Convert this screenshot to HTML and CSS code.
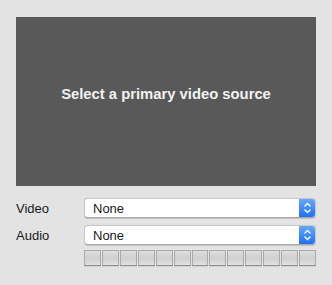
FILE: index.html
```html
<!DOCTYPE html>
<html>
<head>
<meta charset="utf-8">
<link rel="stylesheet" href="styles.css">
</head>
<body>
<div class="app">
  <div class="preview"><span class="msg">Select a primary video source</span></div>
  <div class="form">
    <label class="lbl">Video</label>
    <div class="popup"><span class="val">None</span><span class="step"><svg width="9" height="12" viewBox="0 0 9 12"><path d="M1.5 4.5 L4.5 1.5 L7.5 4.5 M1.5 7.5 L4.5 10.5 L7.5 7.5" fill="none" stroke="#fff" stroke-width="1.3"/></svg></span></div>
    <label class="lbl">Audio</label>
    <div class="popup"><span class="val">None</span><span class="step"><svg width="9" height="12" viewBox="0 0 9 12"><path d="M1.5 4.5 L4.5 1.5 L7.5 4.5 M1.5 7.5 L4.5 10.5 L7.5 7.5" fill="none" stroke="#fff" stroke-width="1.3"/></svg></span></div>
    <span></span>
    <div class="meter">
      <i></i><i></i><i></i><i></i><i></i><i></i><i></i><i></i><i></i><i></i><i></i><i></i><i></i>
    </div>
  </div>
</div>
</body>
</html>
```
FILE: styles.css
```css
html, body { margin: 0; padding: 0; }
body {
  background: #e3e3e3;
  font-family: "Liberation Sans", Arial, sans-serif;
  width: 332px;
  height: 285px;
  overflow: hidden;
}
.app { padding: 17px 16px 0 16px; }
.preview {
  height: 169px;
  box-sizing: border-box;
  padding-bottom: 16px;
  background: #595959;
  display: flex;
  align-items: center;
  justify-content: center;
}
.msg {
  color: #f2f2f2;
  font-weight: bold;
  font-size: 14.8px;
}
.form {
  margin-top: 12px;
  display: grid;
  grid-template-columns: 68px 1fr;
  row-gap: 7px;
  align-items: center;
}
.lbl {
  font-size: 13px;
  color: #1a1a1a;
}
.popup {
  height: 20px;
  box-sizing: border-box;
  background: #fff;
  border-radius: 4px;
  border: 1px solid #c8c8c8;
  border-bottom-color: #a8a8a8;
  box-shadow: 0 0.5px 1px rgba(0,0,0,0.15);
  display: flex;
  align-items: center;
  overflow: hidden;
}
.val {
  flex: 1;
  padding-left: 8px;
  font-size: 13px;
  color: #1a1a1a;
}
.step {
  width: 17px;
  align-self: stretch;
  margin: -1px -1px -1px 0;
  background: linear-gradient(#6aaafd, #1a6ef6);
  display: flex;
  align-items: center;
  justify-content: center;
}
.meter {
  margin-top: -2px;
  display: flex;
  gap: 1px;
}
.meter i {
  flex: 1;
  height: 16px;
  box-sizing: border-box;
  border: 1px solid #a9a9a9;
  border-bottom-color: #909090;
  background: linear-gradient(#dedede, #d0d0d0 50%, #e0e0e0);
  box-shadow: 0 1px 0 #cfcfcf;
}
```
